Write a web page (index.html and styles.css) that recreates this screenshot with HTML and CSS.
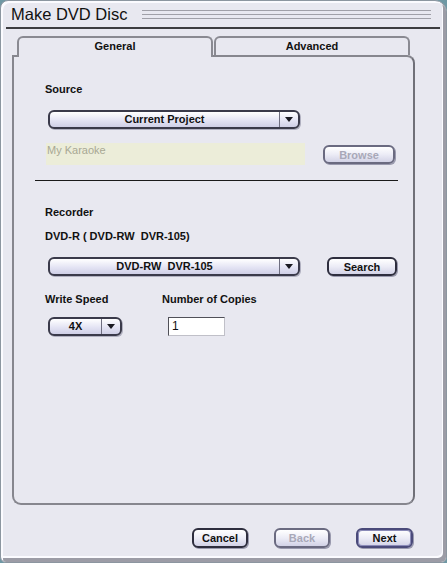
FILE: index.html
```html
<!DOCTYPE html>
<html lang="en">
<head>
    <meta charset="UTF-8">
    <title>Make DVD Disc</title>
    <link rel="stylesheet" href="styles.css">
</head>
<body>
    <div class="window">
        <div class="titlebar">
            <span class="title">Make DVD Disc</span>
            <span class="grip"></span>
        </div>

        <div class="tabs">
            <div class="tab active">General</div>
            <div class="tab">Advanced</div>
        </div>

        <div class="panel">
            <!-- Source -->
            <div class="label first">Source</div>
            <div class="combo wide">
                <span class="combo-text">Current Project</span>
                <span class="combo-arrow"></span>
            </div>
            <div class="row field-row">
                <div class="field">My Karaoke</div>
                <div class="btn disabled browse">Browse</div>
            </div>

            <div class="sep"></div>

            <!-- Recorder -->
            <div class="label recorder">Recorder</div>
            <div class="label device">DVD-R ( DVD-RW&nbsp; DVR-105)</div>
            <div class="row combo-row">
                <div class="combo wide">
                    <span class="combo-text">DVD-RW&nbsp; DVR-105</span>
                    <span class="combo-arrow"></span>
                </div>
                <div class="btn search">Search</div>
            </div>

            <div class="row options">
                <div class="col speed-col">
                    <div class="label">Write Speed</div>
                    <div class="combo small">
                        <span class="combo-text">4X</span>
                        <span class="combo-arrow"></span>
                    </div>
                </div>
                <div class="col">
                    <div class="label">Number of Copies</div>
                    <div class="input">1</div>
                </div>
            </div>
        </div>

        <div class="footer">
            <div class="btn">Cancel</div>
            <div class="btn disabled">Back</div>
            <div class="btn default">Next</div>
        </div>
    </div>
</body>
</html>
```

FILE: styles.css
```css
* {
    margin: 0;
    padding: 0;
    box-sizing: border-box;
}

body {
    background-color: #6f98a4;
    font-family: 'Liberation Sans', Arial, sans-serif;
    color: #111;
}

.window {
    width: 447px;
    height: 563px;
    background-color: #e8e8f0;
    border: 1px solid #8c96a0;
    border-radius: 8px 12px 6px 6px;
    box-shadow: inset 2px 2px 0 #fbfbff, inset -3px -4px 0 #9c9ca6, inset -4px -6px 0 #fbfbff;
    display: flex;
    flex-direction: column;
}

/* Title bar */
.titlebar {
    display: flex;
    align-items: center;
    height: 28px;
    margin: 0 6px 0 5px;
    border-bottom: 2px solid #3c3c40;
}

.title {
    font-size: 16.5px;
    padding-left: 5px;
    padding-top: 1px;
}

.grip {
    flex: 1;
    height: 10px;
    margin: 1px 9px 0 15px;
    background: repeating-linear-gradient(to bottom, #a0a0a8 0, #a0a0a8 1px, transparent 1px, transparent 4px);
}

/* Tabs */
.tabs {
    display: flex;
    margin: 7px 0 0 16px;
    position: relative;
    z-index: 1;
}

.tab {
    width: 196px;
    height: 19px;
    border: 2px solid #8a8a92;
    border-bottom: none;
    border-radius: 6px 6px 0 0;
    font-size: 11px;
    font-weight: bold;
    text-align: center;
    line-height: 16px;
    background-color: #e8e8f0;
}

.tab.active {
    height: 21px;
    margin-right: 1px;
}

/* Panel */
.panel {
    margin: -2px 0 0 11px;
    width: 403px;
    height: 450px;
    border: 2px solid #86868e;
    border-right-color: #707078;
    border-radius: 0 8px 9px 9px;
    padding-left: 31px;
    display: flex;
    flex-direction: column;
}

.label {
    font-size: 11px;
    font-weight: bold;
    line-height: 13px;
}

.label.first {
    margin-top: 26px;
}

.label.recorder {
    margin-top: 25px;
}

.label.device {
    margin-top: 11px;
}

.row {
    display: flex;
    align-items: center;
}

/* Combo boxes */
.combo {
    display: flex;
    height: 19px;
    border: 2px solid #3a3a4a;
    border-radius: 6px;
    background: linear-gradient(to bottom, #ffffff, #e4e4f4 55%, #cfcfe6);
    box-shadow: 1px 1px 0 #b0b0c0;
    font-size: 11px;
    font-weight: bold;
}

.combo.wide {
    width: 252px;
    margin-left: 3px;
    margin-top: 14px;
}

.combo-row .combo.wide {
    margin-top: 0;
}

.combo.small {
    width: 74px;
    margin: 11px 0 0 3px;
}

.combo-text {
    flex: 1;
    text-align: center;
    line-height: 15px;
}

.combo-arrow {
    width: 19px;
    border-left: 1px solid #6e6e80;
    position: relative;
}

.combo-arrow::after {
    content: '';
    position: absolute;
    left: 5px;
    top: 5px;
    border-left: 4px solid transparent;
    border-right: 4px solid transparent;
    border-top: 5px solid #1a1a22;
}

/* Field row */
.field-row {
    margin-top: 14px;
}

.field {
    width: 259px;
    height: 22px;
    margin-left: 1px;
    background-color: #ecedd9;
    color: #a8a894;
    font-size: 11px;
    padding: 1px 0 0 1px;
}

/* Buttons */
.btn {
    height: 20px;
    border: 2px solid #2e2e3e;
    border-radius: 6px;
    background: linear-gradient(to bottom, #ffffff, #ececf6 50%, #d2d2e6);
    box-shadow: 1px 1px 0 #9a9aae;
    font-size: 11px;
    font-weight: bold;
    text-align: center;
    line-height: 16px;
}

.btn.disabled {
    color: #a8a8b8;
    border-color: #6a6a80;
}

.browse {
    width: 72px;
    height: 19px;
    margin-left: 18px;
}

.search {
    width: 70px;
    height: 19px;
    margin-left: 27px;
}

/* Separator */
.sep {
    width: 363px;
    height: 1px;
    margin: 15px 0 0 -10px;
    background-color: #1a1a1a;
}

.combo-row {
    margin-top: 14px;
}

/* Options */
.options {
    margin-top: 17px;
    align-items: flex-start;
}

.col {
    display: flex;
    flex-direction: column;
}

.speed-col {
    width: 117px;
}

.input {
    width: 57px;
    height: 19px;
    margin: 11px 0 0 6px;
    background-color: #fff;
    border: 1px solid #505058;
    border-right-color: #c0c0c8;
    border-bottom-color: #c0c0c8;
    font-size: 12px;
    line-height: 17px;
    padding-left: 3px;
}

/* Footer */
.footer {
    display: flex;
    justify-content: flex-end;
    gap: 26px;
    margin-top: 23px;
    padding-right: 33px;
}

.footer .btn {
    width: 56px;
}

.footer .btn.default {
    width: 57px;
    border-color: #4a4a7a;
    box-shadow: inset 0 0 0 1px #8a8ab8, 1px 1px 0 #9a9aae;
}
```
